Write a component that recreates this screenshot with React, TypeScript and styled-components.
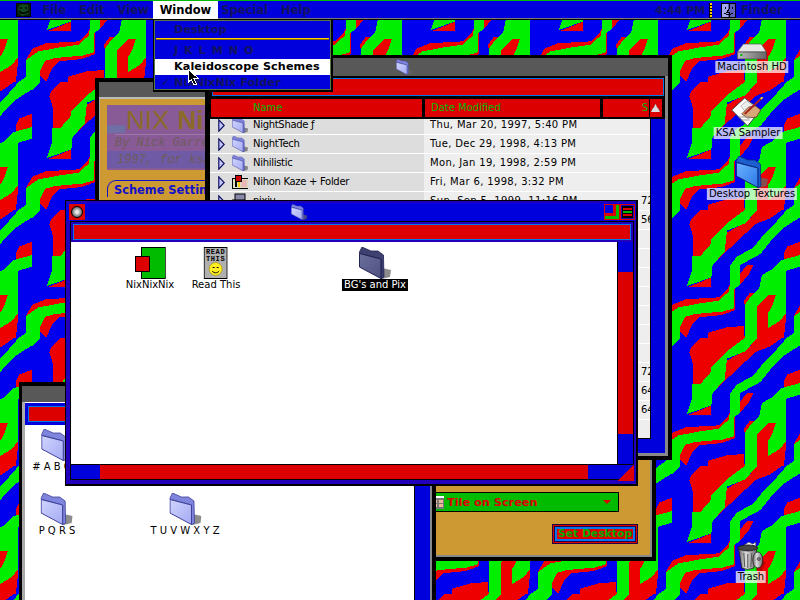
import React from "react"
import styled, { createGlobalStyle } from "styled-components"

const blue = "#0000dd"
const red = "#dd0000"
const green = "#00bb00"
const purple = "#2200bb"
const sky = "#0077ee"
const gray = "#585858"
const tan = "#cc9933"
const ui = `"DejaVu Sans", "Liberation Sans", sans-serif`

const GlobalStyle = createGlobalStyle`
  html, body {
    margin: 0;
    padding: 0;
    background: #000;
  }
`

const Desktop = styled.div`
  position: relative;
  width: 800px;
  height: 600px;
  overflow: hidden;
  font-family: ${ui};
  font-size: 10px;
  color: #000;
`
const Wallpaper = styled.svg`
  position: absolute;
  left: 0;
  top: 0;
`

/* menu bar */
const MenuBar = styled.div`
  position: relative;
  z-index: 5;
  display: flex;
  align-items: center;
  box-sizing: border-box;
  height: 20px;
  padding-left: 16px;
  background: ${blue};
  border-top: 1px solid ${green};
  border-bottom: 1px solid #000;
  box-shadow: inset 0 -1px 0 #777;
`
const MenuTitle = styled.div<{ $open?: boolean; $lead?: number }>`
  height: 18px;
  line-height: 18px;
  margin-left: ${({ $lead }) => $lead ?? 0}px;
  padding: 0 6.5px;
  font-size: 11.5px;
  font-weight: 700;
  background: ${({ $open }) => ($open ? "#fff" : "transparent")};
  color: ${({ $open }) => ($open ? "#000" : "#14145e")};
`
const MenuSpacer = styled.div`
  flex: 1;
`
const Clock = styled.div`
  width: 54px;
  font-size: 11px;
  font-weight: 700;
  white-space: nowrap;
  color: #14145e;
`
const Dots = styled.div`
  width: 2px;
  height: 15px;
  margin-right: 9px;
  border-left: 1px solid #000;
  background: repeating-linear-gradient(#ffcc00 0 2px, #000 2px 3px);
`
const FinderLabel = styled(MenuTitle)`
  width: 59px;
  padding: 0 0 0 5px;
`
const Dropdown = styled.div`
  position: absolute;
  z-index: 6;
  left: 153px;
  top: 19px;
  box-sizing: border-box;
  width: 180px;
  height: 73px;
  padding: 2px 1px;
  background: ${blue};
  border: 1px solid #000;
  border-right-width: 2px;
  border-bottom-width: 2px;
  box-shadow: inset -1px -1px 0 #557744, inset 1px 1px 0 #557744;
`
const DropItem = styled.div<{ $active?: boolean; $wide?: boolean }>`
  position: relative;
  height: 16px;
  line-height: 15px;
  padding-left: 19px;
  font-size: 11.2px;
  font-weight: 700;
  letter-spacing: ${({ $wide }) => ($wide ? "1px" : "0.1px")};
  background: ${({ $active }) => ($active ? "#fff" : "transparent")};
  color: ${({ $active }) => ($active ? "#000" : "#14145e")};
`
const DropRule = styled.div`
  height: 1px;
  margin: 0 1px 3px;
  background: #ffcc00;
  border-bottom: 1px solid #886600;
`
const Check = styled.span`
  position: absolute;
  left: 6px;
  top: 0;
  font-size: 11px;
`
const Cursor = styled.svg`
  position: absolute;
  z-index: 7;
  left: 188px;
  top: 69px;
`

/* windows */
const Frame = styled.div<{ $x: number; $y: number; $w: number; $h: number; $z: number; $border: string }>`
  position: absolute;
  left: ${({ $x }) => $x}px;
  top: ${({ $y }) => $y}px;
  z-index: ${({ $z }) => $z};
  box-sizing: border-box;
  width: ${({ $w }) => $w}px;
  height: ${({ $h }) => $h}px;
  display: flex;
  flex-direction: column;
  background: #000;
  border-style: solid;
  border-color: #000;
  border-width: ${({ $border }) => $border};
  overflow: hidden;
`
const GrayTitle = styled.div<{ $h: number; $pad?: number }>`
  flex: none;
  display: flex;
  align-items: center;
  height: ${({ $h }) => $h}px;
  padding-left: ${({ $pad }) => $pad ?? 0}px;
  background: ${gray};
`

/* control panel window */
const PanelBody = styled.div`
  flex: 1;
  display: flex;
  flex-direction: column;
  padding: 6px 0 11px 7px;
  background: ${tan};
  border-top: 2px solid #bbb;
  border-left: 1px solid #aaa;
  border-right: 2px solid #888;
  border-bottom: 2px solid #888;
`
const Banner = styled.div`
  position: relative;
  width: 240px;
  height: 65px;
  padding-left: 19px;
  box-sizing: border-box;
  background: #885a96;
  overflow: hidden;
`
const BannerPatch = styled.div`
  position: absolute;
  left: 0;
  top: 20px;
  width: 18px;
  height: 8px;
  background: #6f6fa5;
`
const BannerTitle = styled.div`
  height: 29px;
  font-family: "Liberation Sans", sans-serif;
  font-size: 26px;
  line-height: 31px;
  font-weight: 400;
  color: #8b6a2a;
  b {
    margin-left: 1px;
  }
`
const BannerLine = styled.div<{ $smear?: boolean }>`
  margin-left: ${({ $smear }) => ($smear ? "-19px" : "-11px")};
  padding-left: ${({ $smear }) => ($smear ? "10px" : "0")};
  height: 16px;
  line-height: 16px;
  font-family: "Liberation Mono", monospace;
  font-style: italic;
  font-size: 12px;
  color: #6e5c5c;
  background: ${({ $smear }) => ($smear ? "#6f5aa5" : "transparent")};
  border-top: 1px solid ${({ $smear }) => ($smear ? "#6f5aa5" : "#9a75a8")};
`
const TabHead = styled.div`
  margin-top: 10px;
  width: 200px;
  padding: 2px 0 0 6px;
  border-top: 1px solid #1111cc;
  border-left: 1px solid #1111cc;
  border-top-left-radius: 9px;
  font-size: 11.4px;
  font-weight: 700;
  color: #1111cc;
`
const PanelSpacer = styled.div`
  flex: 1;
`
const Popup = styled.div`
  align-self: flex-end;
  display: flex;
  align-items: center;
  box-sizing: border-box;
  width: 222px;
  height: 20px;
  margin-right: 31px;
  padding: 0 7px 0 34px;
  background: ${green};
  border: 1px solid #000;
  color: ${red};
  font-size: 11.3px;
  font-weight: 700;
`
const PopupLabel = styled.span`
  flex: 1;
  margin-left: 3px;
`
const SetButton = styled.div`
  align-self: flex-end;
  box-sizing: border-box;
  width: 80px;
  height: 14px;
  margin: 15px 15px 3px 0;
  line-height: 10px;
  text-align: center;
  background: ${red};
  color: #00aa00;
  font-size: 10.8px;
  font-weight: 700;
  white-space: nowrap;
  border: 2px solid ${sky};
  box-shadow: 0 0 0 1px #220044, 0 0 0 2px ${red}, 0 0 0 3px #220044;
`

/* list window */
const ListPanel = styled.div`
  flex: 1;
  display: flex;
  flex-direction: column;
  background: ${blue};
  border-right: 3px solid #888;
  border-bottom: 3px solid #888;
`
const InfoWrap = styled.div`
  flex: none;
  height: 22px;
  box-sizing: border-box;
  padding: 2px 1px 2px 2px;
  background: #000;
`
const InfoBar = styled.div`
  height: 100%;
  box-sizing: border-box;
  background: ${red};
  border: 1px solid ${sky};
`
const Header = styled.div`
  flex: none;
  display: flex;
  gap: 3px;
  box-sizing: border-box;
  height: 21px;
  padding: 1px 1px 2px 1px;
  background: #000;
`
const HeadCell = styled.div<{ $w: number; $right?: boolean; $pad?: number }>`
  flex: none;
  box-sizing: border-box;
  width: ${({ $w }) => $w}px;
  padding: 0 1px 0 ${({ $pad }) => $pad ?? 0}px;
  line-height: 18px;
  text-align: ${({ $right }) => ($right ? "right" : "left")};
  background: ${red};
  color: ${green};
`
const SortCell = styled(HeadCell)`
  width: 12px;
  display: flex;
  align-items: center;
  justify-content: center;
  margin-left: -2px;
`
const ListBody = styled.div`
  flex: none;
  width: 441px;
  height: 320px;
  box-sizing: border-box;
  border-right: 1px solid #000;
  border-bottom: 1px solid #000;
  overflow: hidden;
`
const Row = styled.div<{ $first?: boolean }>`
  display: grid;
  grid-template-columns: 214px 217px 9px;
  height: ${({ $first }) => ($first ? 16 : 19)}px;
  background: #eee;
  box-shadow: inset 0 -1px 0 #fff;
  line-height: 18px;
  overflow: hidden;
`
const NameCell = styled.div<{ $first?: boolean }>`
  display: flex;
  align-items: center;
  height: 18px;
  margin-top: ${({ $first }) => ($first ? -3 : 0)}px;
  padding-left: 8px;
  background: #ddd;
`
const DateCell = styled.div<{ $first?: boolean }>`
  margin-top: ${({ $first }) => ($first ? -3 : 0)}px;
  padding-left: 6px;
  letter-spacing: 0.35px;
  white-space: nowrap;
`
const SizeCell = styled.div`
  overflow: hidden;
  white-space: nowrap;
`
const Disclosure = styled.svg`
  flex: none;
  margin-right: 7px;
`
const RowName = styled.span`
  margin-left: 5px;
  letter-spacing: -0.3px;
  white-space: nowrap;
`

/* blue top window */
const BlueFrame = styled.div`
  position: absolute;
  z-index: 4;
  left: 65px;
  top: 200px;
  box-sizing: border-box;
  width: 573px;
  height: 286px;
  padding: 2px 0 4px;
  background: ${purple};
  border: 1px solid #000;
  border-width: 1px 2px 2px 1px;
`
const BlueTitle = styled.div`
  display: flex;
  align-items: center;
  height: 18px;
  padding: 0 0 0 3px;
  background: ${blue};
`
const CloseBox = styled.div`
  flex: none;
  display: flex;
  align-items: center;
  justify-content: center;
  width: 16px;
  height: 16px;
  background: ${red};
`
const CloseDot = styled.div`
  width: 10px;
  height: 10px;
  border: 1px solid #000;
  border-radius: 50%;
  background: radial-gradient(circle at 50% 50%, #eee 15%, #999 50%, #333 95%);
`
const TitleIconSlot = styled.div`
  flex: none;
  width: 16px;
  height: 17px;
  margin-left: 206px;
`
const TitleSpacer = styled.div`
  flex: 1;
`
const TitleBoxes = styled.div`
  display: flex;
  margin-right: 1px;
`
const BluePanel = styled.div`
  margin: 0 2px 0 4px;
  background: ${purple};
  border: 1px solid #000;
`
const BlueInfo = styled.div`
  height: 20px;
  box-sizing: border-box;
  padding: 2px 2px 2px 2px;
`
const BlueBody = styled.div`
  display: flex;
  height: 222px;
  border-bottom: 1px solid #000;
`
const IconCanvas = styled.div`
  position: relative;
  flex: none;
  width: 546px;
  background: #fff;
  border-right: 1px solid #000;
`
const VScroll = styled.div`
  flex: 1;
  padding-top: 30px;
  background: ${blue};
`
const VThumb = styled.div`
  height: 162px;
  background: ${red};
`
const HScroll = styled.div`
  position: relative;
  height: 14px;
  padding-left: 29px;
  background: ${blue};
`
const HThumb = styled.div`
  width: 488px;
  height: 100%;
  background: ${red};
`
const GrowBox = styled.svg`
  position: absolute;
  right: -1px;
  top: 0;
`

/* folder window at the back */
const FolderPanel = styled.div`
  flex: 1;
  display: flex;
  flex-direction: column;
  border-left: 3px solid #aaa;
  border-right: 2px solid #888;
  background: #fff;
`
const FolderInfo = styled.div`
  flex: none;
  height: 22px;
  box-sizing: border-box;
  margin-top: 1px;
  padding: 3px;
  background: ${blue};
`
const FolderBody = styled.div`
  flex: 1;
  display: flex;
`
const FolderCanvas = styled.div`
  position: relative;
  flex: 1;
  border-right: 1px solid #000;
  background: #fff;
`
const FolderScroll = styled.div`
  flex: none;
  width: 15px;
  background: ${blue};
`

/* icons */
const IconItem = styled.div<{ $x: number; $y: number; $z?: number }>`
  position: absolute;
  left: ${({ $x }) => $x}px;
  top: ${({ $y }) => $y}px;
  z-index: ${({ $z }) => $z ?? "auto"};
  transform: translateX(-50%);
  display: flex;
  flex-direction: column;
  align-items: center;
`
const IconLabel = styled.div<{ $kind?: "desk" | "selected" }>`
  height: 12px;
  line-height: 12px;
  padding: 0 ${({ $kind }) => ($kind ? 2 : 0)}px;
  white-space: nowrap;
  background: ${({ $kind }) =>
    $kind === "desk" ? "rgba(255,255,255,0.72)" : $kind === "selected" ? "#000" : "transparent"};
  color: ${({ $kind }) => ($kind === "selected" ? "#fff" : "#000")};
`

const tones = {
  lilac: { light: "#d0d4ff", mid: "#a4aaf2", back: "#7f85dc", line: "#3d3f98" },
  dark: { light: "#6b6f9c", mid: "#4f5280", back: "#3f4270", line: "#1e2050" },
  sky: { light: "#6cb2ff", mid: "#2a78e8", back: "#1c60d0", line: "#082a80" },
}

const Folder = ({ tone = "lilac", size = 32 }: { tone?: keyof typeof tones; size?: number }) => {
  const c = tones[tone]
  const id = `folder-${tone}`
  return (
    <svg width={size} height={size} viewBox="0 0 32 32">
      <defs>
        <linearGradient id={id} x1="0" y1="0" x2="1" y2="1">
          <stop offset="0" stopColor={c.light} />
          <stop offset="1" stopColor={c.mid} />
        </linearGradient>
      </defs>
      <polygon points="23,21 32,23 31,30 23,32" fill="#666" opacity="0.75" />
      <polygon points="3,0 12,4 19,4 24.5,8 25,30 22,32 22,12 0,6" fill={c.back} stroke={c.line} strokeWidth="0.8" />
      <polygon points="0.5,6.5 22,12 22,31.5 0.5,20" fill={`url(#${id})`} stroke={c.line} strokeWidth="1" />
    </svg>
  )
}

const AppleFace = () => (
  <svg width="15" height="14" viewBox="0 0 15 14">
    <rect x="0.5" y="0.5" width="14" height="13" fill="#06200c" stroke="#000" />
    <path d="M3 3 L7 1 L12 2 L12 11 L6 13 L2 9 Z" fill="#0f4a1e" />
    <path d="M5 4v2M10 4v2M3 8c2 3 7 3 9 0" stroke="#000" strokeWidth="1.4" fill="none" />
  </svg>
)

const FinderFace = () => (
  <svg width="15" height="15" viewBox="0 0 15 15" shapeRendering="crispEdges">
    <rect x="0.5" y="0.5" width="14" height="14" fill="#a4a8f0" stroke="#000" />
    <rect x="7" y="1" width="7" height="13" fill="#5c60b8" />
    <path d="M8 0v6L6 9h2v6M4 4v2M11 4v2M3 10c2 2 7 2 9 0" stroke="#000" fill="none" />
  </svg>
)

const ArrowCursor = () => (
  <Cursor width="12" height="17" viewBox="0 0 12 17" shapeRendering="crispEdges">
    <path d="M0.5 0.5 L0.5 13 L3.5 10.5 L6 16 L8.5 15 L6 9.5 L10.5 9.5 Z" fill="#000" stroke="#fff" />
  </Cursor>
)

const TriangleRight = () => (
  <Disclosure width="7" height="13" viewBox="0 0 7 13">
    <polygon points="0.8,0.8 6.2,6.5 0.8,12.2" fill="#c4c8ff" stroke="#101060" strokeWidth="1.2" />
  </Disclosure>
)

const HouseIcon = () => (
  <svg width="16" height="14" viewBox="0 0 16 14" shapeRendering="crispEdges">
    <rect x="0" y="3" width="16" height="10" fill="#ddb" stroke="#000" />
    <rect x="9" y="5" width="6" height="7" fill="#e8b8b8" />
    <rect x="3" y="0" width="6" height="6" fill="#c00" stroke="#000" />
    <rect x="3" y="7" width="2" height="5" fill="#000" />
    <rect x="6" y="7" width="2" height="5" fill="#fc0" />
  </svg>
)

const DocIcon = () => (
  <svg width="16" height="16" viewBox="0 0 16 16">
    <rect x="3" y="1" width="10" height="8" fill="#88a" stroke="#000" />
    <rect x="0.5" y="7" width="12" height="7" fill="#5577dd" stroke="#000" />
  </svg>
)

const NixIcon = () => (
  <svg width="31" height="32" viewBox="0 0 31 32" shapeRendering="crispEdges">
    <rect x="6.5" y="0.5" width="24" height="31" fill={green} stroke="#000" />
    <rect x="0.5" y="9.5" width="14" height="15" fill={red} stroke="#000" />
  </svg>
)

const ReadText = styled.text`
  font-family: "Liberation Mono", monospace;
  font-size: 7px;
  font-weight: 700;
`

const ReadMe = () => (
  <svg width="24" height="32" viewBox="0 0 24 32">
    <rect x="0.5" y="0.5" width="23" height="31" fill="#b0b0b0" stroke="#000" />
    <ReadText x="12" y="7" textAnchor="middle" letterSpacing="0.6">READ</ReadText>
    <ReadText x="12" y="14" textAnchor="middle" letterSpacing="0.6">THIS</ReadText>
    <circle cx="12" cy="22" r="6.5" fill="#ffee22" stroke="#998800" strokeWidth="0.6" />
    <path d="M9 20.5h2M13 20.5h2M8.5 24c2 2.4 5 2.4 7 0" stroke="#000" fill="none" />
  </svg>
)

const DiskIcon = () => (
  <svg width="32" height="18" viewBox="0 0 32 18">
    <defs>
      <linearGradient id="hd" x1="0" x2="1" y1="0" y2="0">
        <stop offset="0" stopColor="#bbb" />
        <stop offset="1" stopColor="#666" />
      </linearGradient>
    </defs>
    <polygon points="7,1 25,1 30,9 1,9" fill="#e6e6e6" stroke="#555" strokeWidth="0.7" />
    <rect x="1" y="9" width="29" height="7" fill="url(#hd)" stroke="#444" strokeWidth="0.7" />
    <rect x="4" y="11" width="2" height="2" fill="#00bb00" />
  </svg>
)

const SamplerIcon = () => (
  <svg width="34" height="30" viewBox="0 0 34 30">
    <polygon points="1,13 14,1 30,13 17,29" fill="#fff" stroke="#444" />
    <polygon points="10,9 16,4 24,10 14,14" fill="#eee" stroke="#888" strokeWidth="0.5" />
    <path d="M11 17 L18 10 L25 9 L30 13 L26 20 L17 21 Z" fill="#d8a878" stroke="#6a3a20" strokeWidth="0.8" />
    <path d="M14 17 L30 2" stroke="#aa2222" strokeWidth="2" />
    <path d="M30 2 L32 0" stroke="#e8c020" strokeWidth="2" />
    <path d="M8 20h12M11 23h8" stroke="#999" />
  </svg>
)

const TrashIcon = () => (
  <svg width="30" height="30" viewBox="0 0 30 30">
    <defs>
      <linearGradient id="can" x1="0" x2="1" y1="0" y2="0">
        <stop offset="0" stopColor="#666" />
        <stop offset="0.4" stopColor="#ddd" />
        <stop offset="1" stopColor="#666" />
      </linearGradient>
    </defs>
    <polygon points="23,16 30,22 26,30 20,29" fill="#990000" opacity="0.6" />
    <polygon points="7,5 13,1 17,3 20,1 20,7 9,8" fill="#fff" stroke="#333" strokeWidth="0.6" />
    <ellipse cx="12" cy="7" rx="10" ry="3" fill="#444" stroke="#222" />
    <path d="M3 8 L6 27 Q12 30 18 27 L21 8 Q12 12 3 8 Z" fill="url(#can)" stroke="#222" strokeWidth="0.8" />
    <path d="M8 12l1 14M12 13v14M16 12l-1 14" stroke="#555" />
    <ellipse cx="22" cy="19" rx="5" ry="8" fill="url(#can)" stroke="#222" strokeWidth="0.8" />
    <circle cx="23" cy="18" r="1.6" fill="#777" stroke="#222" strokeWidth="0.5" />
  </svg>
)

const TileGlyph = () => (
  <svg width="12" height="13" viewBox="0 0 12 13" shapeRendering="crispEdges">
    <rect x="0" y="0" width="12" height="13" fill="#777" />
    <rect x="0" y="0" width="12" height="2" fill="#fff" />
    <path d="M1 4h4v3H1zM7 4h4v3H7zM1 8h4v3H1zM7 8h4v3H7z" fill="#f0b898" />
  </svg>
)

const ZoomGlyph = () => (
  <svg width="16" height="16" viewBox="0 0 16 16" shapeRendering="crispEdges">
    <rect width="16" height="16" fill={red} />
    <rect x="1" y="1" width="14" height="14" fill={green} />
    <rect x="1" y="1" width="11" height="11" fill={red} />
    <rect x="1" y="1" width="8" height="8" fill={blue} />
  </svg>
)

const CollapseGlyph = () => (
  <svg width="15" height="16" viewBox="0 0 15 16" shapeRendering="crispEdges">
    <rect width="15" height="16" fill={red} />
    <rect x="1" y="1" width="13" height="14" fill={purple} />
    <rect x="2" y="2" width="11" height="12" fill="#000" />
    <rect x="3" y="4" width="9" height="2" fill={red} />
    <rect x="3" y="7" width="9" height="2" fill={green} />
    <rect x="3" y="10" width="9" height="2" fill={red} />
  </svg>
)

const redShapes = [
  "85,0 60,25 52,42 62,75 62,138 85,138 115,105 118,88 165,40 218,0",
  "108,384 108,368 165,352 215,348 218,384",
  "255,0 330,0 295,25 250,42 190,100 150,135 122,165 120,140 158,125 160,70 225,35",
  "255,384 255,290 290,255 312,255 300,290 288,310 288,384",
  "288,384 288,355 324,332 342,310 340,350 335,384",
  "45,232 100,210 118,202 118,232",
  "205,222 205,190 225,165 245,165 230,195",
  "215,275 232,250 252,248 240,262 218,285",
  "335,130 345,110 384,95 384,135 335,150",
  "365,320 384,285 384,350 365,340",
  "0,285 40,268 140,262 165,240 175,220 190,240 190,300 150,315 80,322 60,345 42,384 25,365 25,350 0,350",
]
const greenShapes = [
  "0,0 25,0 0,25",
  "45,228 60,180 60,138 85,138 115,105 118,88 165,40 218,0 255,0 220,40 165,62 158,125 122,165 118,202",
  "175,165 195,140 245,112 270,80 300,50 344,0 384,0 384,22 340,50 295,95 265,132 205,165 205,222 185,240 185,295 150,305 70,312 40,320 25,350 0,350 0,305 20,292 85,280 140,272 170,245 175,220",
  "218,285 232,265 262,235 270,195 300,178 330,150 384,135 384,170 342,182 342,310 324,332 288,355 288,310 300,290 312,255 290,255 255,290 255,345 218,348",
  "218,348 255,345 255,384 218,384",
  "365,320 384,305 384,384 344,384 365,370",
  "0,350 25,350 25,384 0,384",
]

const rows = [
  { name: "NightShade ƒ", date: "Thu, Mar 20, 1997, 5:40 PM" },
  { name: "NightTech", date: "Tue, Dec 29, 1998, 4:13 PM" },
  { name: "Nihilistic", date: "Mon, Jan 19, 1998, 2:59 PM" },
  { name: "Nihon Kaze + Folder", date: "Fri, Mar 6, 1998, 3:32 PM", icon: "house" },
  { name: "nixiu", date: "Sun, Sep 5, 1999, 11:16 PM", icon: "doc", size: "724" },
  { name: "", date: "", size: "56" },
  { name: "", date: "" },
  { name: "", date: "" },
  { name: "", date: "" },
  { name: "", date: "" },
  { name: "", date: "" },
  { name: "", date: "" },
  { name: "", date: "" },
  { name: "", date: "", size: "72" },
  { name: "", date: "", size: "64" },
  { name: "", date: "", size: "64" },
  { name: "", date: "" },
]

const App = () => (
  <Desktop>
    <GlobalStyle />
    <Wallpaper width="800" height="600" shapeRendering="crispEdges">
      <defs>
        <pattern id="waves" patternUnits="userSpaceOnUse" x="32" y="82" width="128" height="128">
          <rect width="128" height="128" fill="#0000ee" />
          <g transform="scale(0.33333)">
            {redShapes.map((points) => (
              <polygon key={points} points={points} fill="#ee0000" />
            ))}
            {greenShapes.map((points) => (
              <polygon key={points} points={points} fill="#00ee00" />
            ))}
          </g>
        </pattern>
      </defs>
      <rect width="800" height="600" fill="url(#waves)" />
    </Wallpaper>

    <MenuBar>
      <AppleFace />
      <MenuTitle $lead={5}>File</MenuTitle>
      <MenuTitle>Edit</MenuTitle>
      <MenuTitle>View</MenuTitle>
      <MenuTitle $open $lead={-2}>Window</MenuTitle>
      <MenuTitle $lead={-3}>Special</MenuTitle>
      <MenuTitle>Help</MenuTitle>
      <MenuSpacer />
      <Clock>4:44 PM</Clock>
      <Dots />
      <FinderFace />
      <FinderLabel>Finder</FinderLabel>
    </MenuBar>
    <Dropdown>
      <DropItem>Desktop</DropItem>
      <DropRule />
      <DropItem $wide>J K L M N O</DropItem>
      <DropItem $active>Kaleidoscope Schemes</DropItem>
      <DropItem>
        <Check>✓</Check>
        NixNixNix Folder
      </DropItem>
    </Dropdown>
    <ArrowCursor />

    <IconItem $x={752} $y={43}>
      <DiskIcon />
      <IconLabel $kind="desk">Macintosh HD</IconLabel>
    </IconItem>
    <IconItem $x={748} $y={97}>
      <SamplerIcon />
      <IconLabel $kind="desk">KSA Sampler</IconLabel>
    </IconItem>
    <IconItem $x={752} $y={156}>
      <Folder tone="sky" />
      <IconLabel $kind="desk">Desktop Textures</IconLabel>
    </IconItem>
    <IconItem $x={751} $y={541}>
      <TrashIcon />
      <IconLabel $kind="desk">Trash</IconLabel>
    </IconItem>

    <Frame $x={95} $y={78} $w={561} $h={483} $z={1} $border="4px">
      <GrayTitle $h={15} />
      <PanelBody>
        <Banner>
          <BannerPatch />
          <BannerTitle>
            NIX <b>Nix</b>
          </BannerTitle>
          <BannerLine>By Nick Garrett</BannerLine>
          <BannerLine $smear>1997, for ksa</BannerLine>
        </Banner>
        <TabHead>Scheme Settings</TabHead>
        <PanelSpacer />
        <Popup>
          <TileGlyph />
          <PopupLabel>Tile on Screen</PopupLabel>
          <svg width="8" height="4" viewBox="0 0 8 4">
            <polygon points="0,0 8,0 4,4" fill={red} />
          </svg>
        </Popup>
        <SetButton>Set Desktop</SetButton>
      </PanelBody>
    </Frame>

    <Frame $x={205} $y={55} $w={467} $h={405} $z={2} $border="3px 4px 4px 5px">
      <GrayTitle $h={18} $pad={186}>
        <Folder size={16} />
      </GrayTitle>
      <ListPanel>
        <InfoWrap>
          <InfoBar />
        </InfoWrap>
        <Header>
          <HeadCell $w={211} $pad={42}>Name</HeadCell>
          <HeadCell $w={175} $pad={6}>Date Modified</HeadCell>
          <HeadCell $w={46} $right>S</HeadCell>
          <SortCell $w={12}>
            <svg width="9" height="8" viewBox="0 0 9 8" shapeRendering="crispEdges">
              <polygon points="4.5,0 9,8 0,8" fill="#ddd" stroke="#888" strokeWidth="0.5" />
            </svg>
          </SortCell>
        </Header>
        <ListBody>
          {rows.map((row, i) => (
            <Row key={i} $first={i === 0}>
              <NameCell $first={i === 0}>
                {row.name && <TriangleRight />}
                {row.name &&
                  (row.icon === "house" ? <HouseIcon /> : row.icon === "doc" ? <DocIcon /> : <Folder size={16} />)}
                <RowName>{row.name}</RowName>
              </NameCell>
              <DateCell $first={i === 0}>{row.date}</DateCell>
              <SizeCell>{row.size}</SizeCell>
            </Row>
          ))}
        </ListBody>
      </ListPanel>
    </Frame>

    <Frame $x={19} $y={382} $w={417} $h={240} $z={3} $border="4px 4px 0 3px">
      <GrayTitle $h={16} />
      <FolderPanel>
        <FolderInfo>
          <InfoBar />
        </FolderInfo>
        <FolderBody>
          <FolderCanvas>
            <IconItem $x={32} $y={4}>
              <Folder />
              <IconLabel>#&nbsp;A&nbsp;B&nbsp;C&nbsp;D</IconLabel>
            </IconItem>
            <IconItem $x={32} $y={68}>
              <Folder />
              <IconLabel>P Q R S</IconLabel>
            </IconItem>
            <IconItem $x={160} $y={68}>
              <Folder />
              <IconLabel>T U V W X Y Z</IconLabel>
            </IconItem>
          </FolderCanvas>
          <FolderScroll />
        </FolderBody>
      </FolderPanel>
    </Frame>

    <BlueFrame>
      <BlueTitle>
        <CloseBox>
          <CloseDot />
        </CloseBox>
        <TitleIconSlot>
          <Folder size={16} />
        </TitleIconSlot>
        <TitleSpacer />
        <TitleBoxes>
          <ZoomGlyph />
          <CollapseGlyph />
        </TitleBoxes>
      </BlueTitle>
      <BluePanel>
        <BlueInfo>
          <InfoBar />
        </BlueInfo>
        <BlueBody>
          <IconCanvas>
            <IconItem $x={79} $y={5}>
              <NixIcon />
              <IconLabel>NixNixNix</IconLabel>
            </IconItem>
            <IconItem $x={145} $y={5}>
              <ReadMe />
              <IconLabel>Read This</IconLabel>
            </IconItem>
            <IconItem $x={304} $y={5}>
              <Folder tone="dark" />
              <IconLabel $kind="selected">BG's and Pix</IconLabel>
            </IconItem>
          </IconCanvas>
          <VScroll>
            <VThumb />
          </VScroll>
        </BlueBody>
        <HScroll>
          <HThumb />
          <GrowBox width="17" height="16" viewBox="0 0 17 16" shapeRendering="crispEdges">
            <polygon points="17,0 17,16 0,16" fill={red} />
          </GrowBox>
        </HScroll>
      </BluePanel>
    </BlueFrame>
  </Desktop>
)

export default App
